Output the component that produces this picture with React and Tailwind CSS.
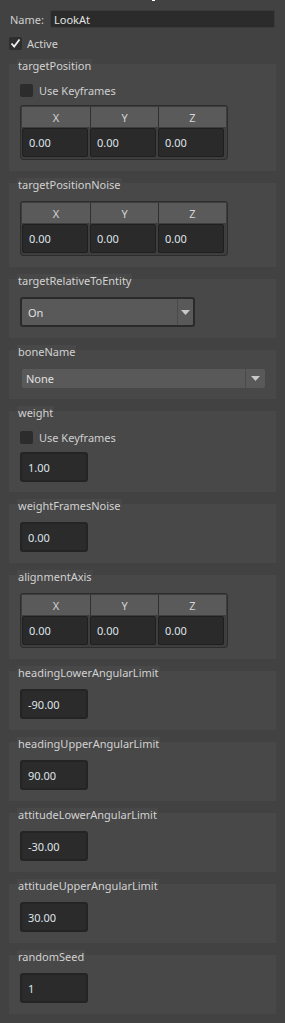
import React from "react";

const font = { fontFamily: '"Noto Sans", "Open Sans", sans-serif' };

function Legend({ children }) {
  return (
    <div className="flex h-[14px] -mt-[5px]">
      <span className="block h-[14px] ml-[8px] px-[1px] bg-[#484848] text-[11px] leading-[14px] text-[#d2d2d2]">
        {children}
      </span>
    </div>
  );
}

function Panel({ label, children, pb = "pb-[11px]" }) {
  return (
    <div className={`bg-[#484848] ${pb}`}>
      <Legend>{label}</Legend>
      {children}
    </div>
  );
}

function CheckRow({ className = "" }) {
  return (
    <div className={`flex items-center h-[13px] ml-[11px] ${className}`}>
      <div className="w-[13px] h-[13px] rounded-[2px] bg-[#2c2c2c]" />
      <span className="ml-[6px] text-[11px] leading-[13px] text-[#cfcfcf]">Use Keyframes</span>
    </div>
  );
}

function NumInput({ value, className = "" }) {
  return (
    <div
      className={`ml-[11px] w-[68px] h-[30px] rounded-[3px] border-2 border-[#242424] bg-[#2b2b2b] flex items-center pl-[6px] text-[11px] leading-none text-[#dfe3ea] ${className}`}
    >
      {value}
    </div>
  );
}

function Vec3({ className = "" }) {
  return (
    <div className={`ml-[11px] w-[208px] h-[55px] rounded-[3px] border border-[#2c2c2c] bg-[#3e3e3e] p-[1px] ${className}`}>
      <div className="grid grid-cols-3 h-[20px] bg-[#5a5a5a]">
        {["X", "Y", "Z"].map((a, i) => (
          <div
            key={a}
            className={`flex items-center justify-center text-[11px] leading-none text-[#d4d4d4] ${i > 0 ? "border-l border-[#2f2f2f]" : ""}`}
          >
            {a}
          </div>
        ))}
      </div>
      <div className="grid grid-cols-3 mt-[1px]">
        {[0, 1, 2].map((i) => (
          <div
            key={i}
            className="w-[66px] h-[29px] rounded-[2px] border border-[#1f1f1f] bg-[#2a2a2a] flex items-center pl-[6px] text-[11px] leading-none text-[#dfe3ea]"
          >
            0.00
          </div>
        ))}
      </div>
    </div>
  );
}

function Arrow() {
  return (
    <svg width="9" height="5" viewBox="0 0 9 5">
      <path d="M0 0 H9 L4.5 5 Z" fill="#c8c8c8" />
    </svg>
  );
}

export default function App() {
  return (
    <div className="w-[285px] h-[1023px] bg-[#424242] overflow-hidden" style={font}>
      <div className="h-[10px]">
        <div className="ml-[152px] w-[3px] h-[1px] bg-white" />
      </div>
      <div className="flex items-center h-[18px]">
        <span className="ml-[10px] w-[40px] text-[11px] leading-none text-[#cfcfcf]">Name:</span>
        <div className="w-[225px] h-[18px] rounded-[2px] border border-[#3a3a3a] bg-[#2b2b2b] flex items-center pl-[3px] text-[11px] leading-none text-[#e2e2e2]">
          LookAt
        </div>
      </div>
      <div className="flex items-center h-[13px] mt-[9px] ml-[9px]">
        <div className="w-[13px] h-[13px] rounded-[2px] bg-[#2e2e2e] flex items-center justify-center">
          <svg width="11" height="11" viewBox="0 0 11 11">
            <path d="M1.5 5.5 L4.2 8.5 L9.5 1.5" stroke="#f0f0f0" strokeWidth="1.8" fill="none" />
          </svg>
        </div>
        <span className="ml-[5px] text-[11px] leading-none text-[#d2d2d2]">Active</span>
      </div>

      <div className="mt-[14px] mx-[9px] flex flex-col gap-[12px]">
        <Panel label="targetPosition">
          <CheckRow className="mt-[11px]" />
          <Vec3 className="mt-[8px]" />
        </Panel>
        <Panel label="targetPositionNoise">
          <Vec3 className="mt-[9px]" />
        </Panel>
        <Panel label="targetRelativeToEntity">
          <div className="mt-[9px] ml-[11px] w-[175px] h-[30px] rounded-[3px] border-2 border-[#2a2a2a] bg-[#595959] flex">
            <div className="flex-1 flex items-center pl-[6px] text-[11px] leading-none text-[#e0e0e0]">On</div>
            <div className="w-[16px] border-l border-[#4a4a4a] flex items-center justify-center">
              <Arrow />
            </div>
          </div>
        </Panel>
        <Panel label="boneName">
          <div className="mt-[10px] ml-[13px] w-[243px] h-[19px] rounded-[2px] bg-[#595959] flex">
            <div className="flex-1 flex items-center pl-[4px] text-[11px] leading-none text-[#e0e0e0]">None</div>
            <div className="w-[20px] border-l border-[#4a4a4a] flex items-center justify-center">
              <Arrow />
            </div>
          </div>
        </Panel>
        <Panel label="weight" pb="pb-[10px]">
          <CheckRow className="mt-[11px]" />
          <NumInput className="mt-[8px]" value="1.00" />
        </Panel>
        <Panel label="weightFramesNoise">
          <NumInput className="mt-[9px]" value="0.00" />
        </Panel>
        <Panel label="alignmentAxis">
          <Vec3 className="mt-[9px]" />
        </Panel>
        <Panel label="headingLowerAngularLimit">
          <NumInput className="mt-[9px]" value="-90.00" />
        </Panel>
        <Panel label="headingUpperAngularLimit">
          <NumInput className="mt-[9px]" value="90.00" />
        </Panel>
        <Panel label="attitudeLowerAngularLimit">
          <NumInput className="mt-[9px]" value="-30.00" />
        </Panel>
        <Panel label="attitudeUpperAngularLimit">
          <NumInput className="mt-[9px]" value="30.00" />
        </Panel>
        <Panel label="randomSeed">
          <NumInput className="mt-[9px]" value="1" />
        </Panel>
      </div>
    </div>
  );
}
